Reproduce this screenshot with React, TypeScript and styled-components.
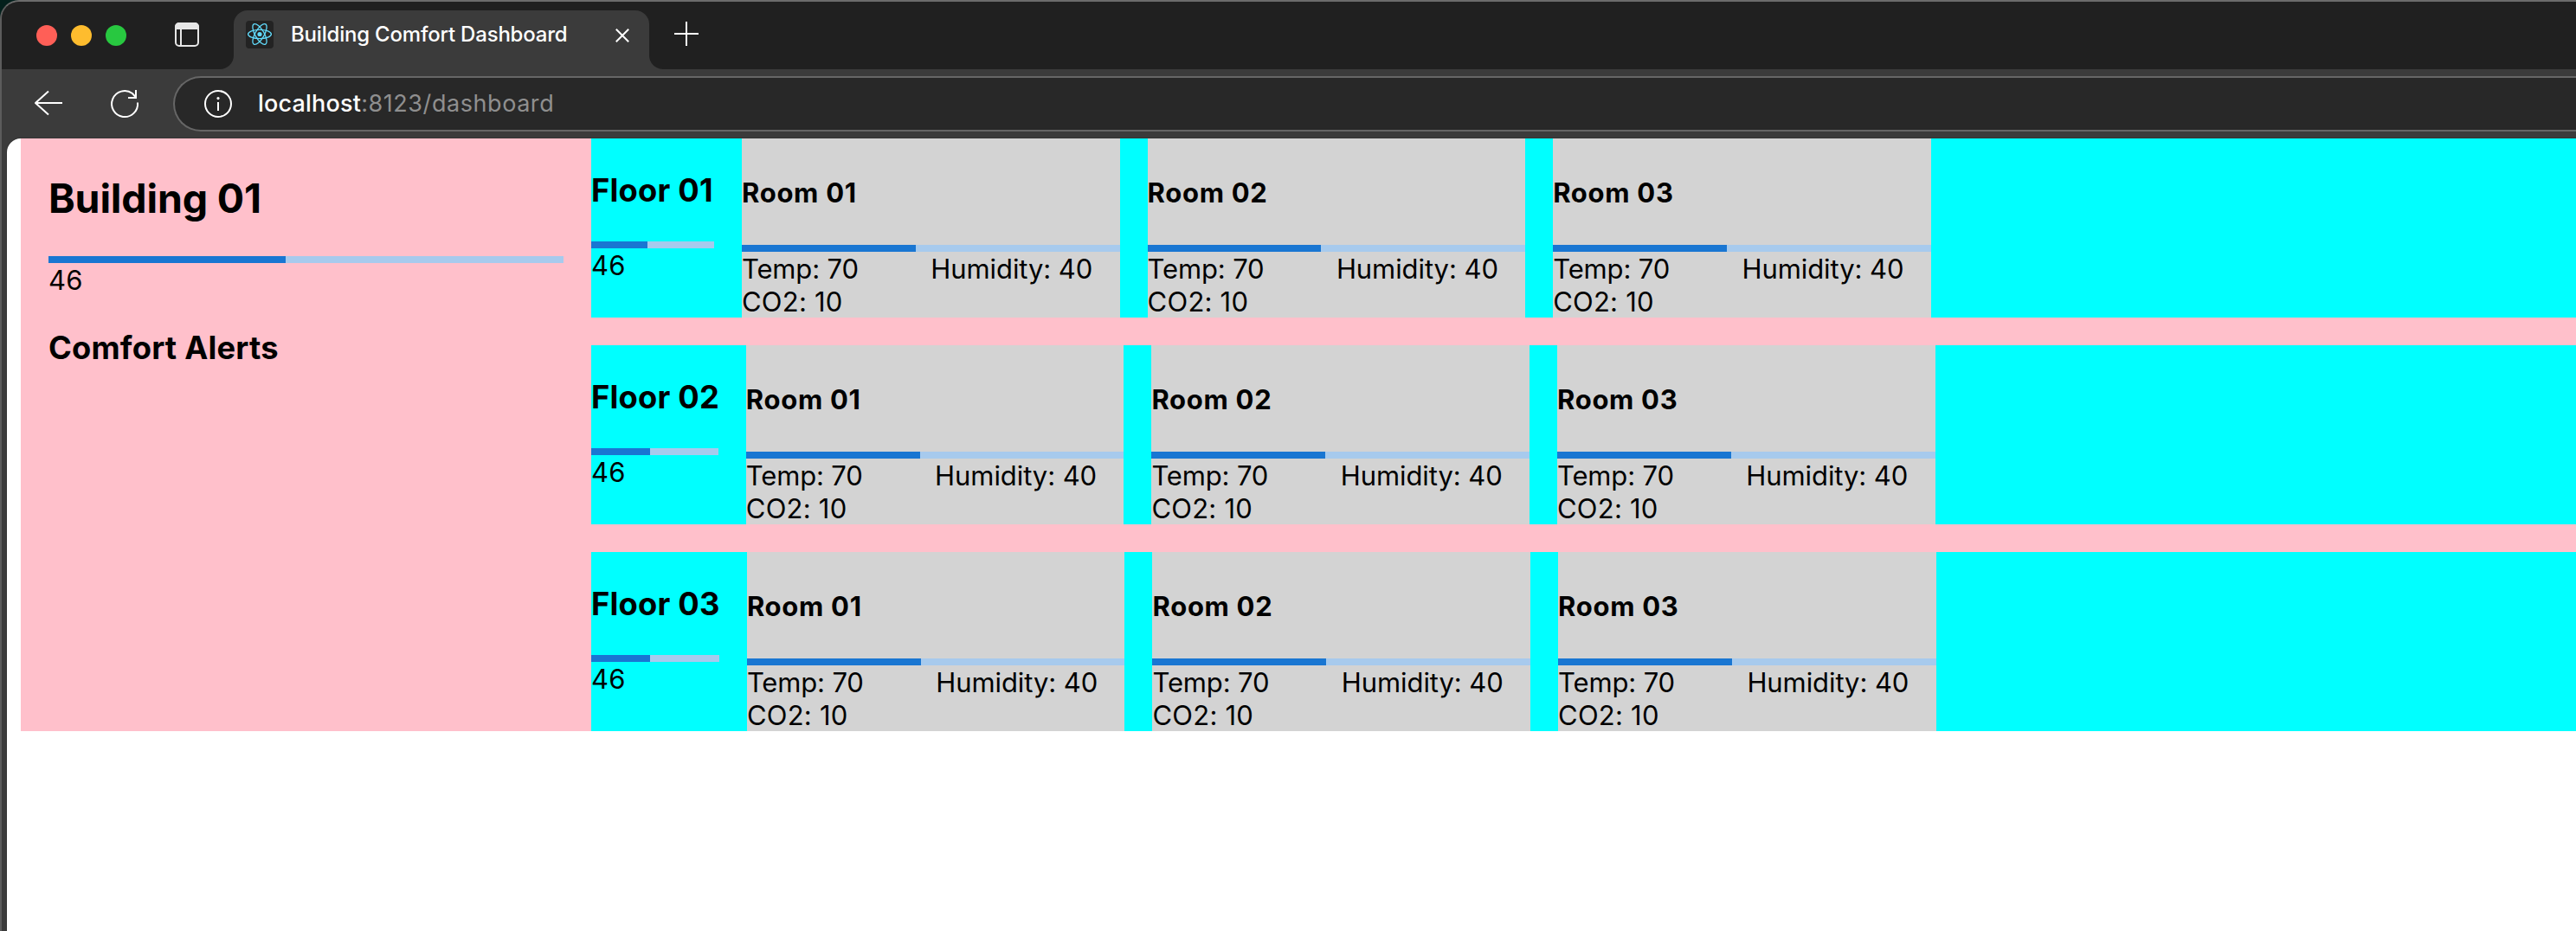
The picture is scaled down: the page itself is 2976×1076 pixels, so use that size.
import React from "react";
import styled, { createGlobalStyle } from "styled-components";

const GlobalStyle = createGlobalStyle`
  html, body { margin: 0; padding: 0; background: #04201c; }
  * { box-sizing: border-box; }
  body { font-family: "Inter", "Liberation Sans", sans-serif; color: #000; overflow: hidden; }
  h1, h2, h3, p { margin: 0; }
  svg { display: block; flex: none; }
`;

/* ---------- browser window ---------- */

const Window = styled.div`
  display: flex;
  flex-direction: column;
  width: 2976px;
  height: 1076px;
  border-top: 2px solid #6b6b6b;
  border-left: 2px solid #5c5c5c;
  border-top-left-radius: 22px;
  background: #3b3b3b;
  overflow: hidden;
`;

const TitleBar = styled.header`
  display: flex;
  height: 78px;
  flex: none;
`;

const WindowControls = styled.div`
  display: flex;
  align-items: center;
  gap: 16px;
  width: 268px;
  padding-left: 40px;
  background: #202020;
  border-bottom-right-radius: 16px;
`;

const Light = styled.span<{ $color: string }>`
  width: 24px;
  height: 24px;
  border-radius: 50%;
  background: ${(p) => p.$color};
`;

const PanelIcon = styled.svg`
  margin: -3px 0 0 40px;
`;

const TabSlot = styled.div`
  width: 480px;
  padding-top: 10px;
  background: linear-gradient(#202020 40px, transparent 40px);
`;

const Tab = styled.div`
  display: flex;
  align-items: flex-start;
  height: 68px;
  padding: 12px 23px 0 14px;
  border-radius: 16px 16px 0 0;
  background: #3b3b3b;
`;

const Favicon = styled.svg`
  border-radius: 4px;
  background: #232323;
`;

const TabTitle = styled.span`
  flex: 1;
  margin-left: 20px;
  padding-top: 1px;
  color: #fff;
  font-size: 24px;
  font-weight: 500;
  line-height: 29px;
  letter-spacing: -0.2px;
  white-space: nowrap;
`;

const CloseIcon = styled.svg`
  margin-top: 9px;
`;

const TabStrip = styled.div`
  flex: 1;
  padding: 23px 0 0 29px;
  background: #202020;
  border-bottom-left-radius: 16px;
`;

const Toolbar = styled.div`
  display: flex;
  align-items: center;
  flex: none;
  height: 80px;
  padding-left: 36px;
`;

const ReloadIcon = styled.svg`
  margin: 0 38px 0 52px;
`;

const AddressBar = styled.div`
  display: flex;
  align-items: center;
  flex: 1;
  height: 64px;
  padding-left: 34px;
  border: 2px solid #666;
  border-right: 0;
  border-radius: 32px 0 0 32px;
  background: #282828;
`;

const Url = styled.span`
  margin-left: 30px;
  color: #8f8f8f;
  font-size: 27px;
  line-height: 34px;
  letter-spacing: 0.56px;
  white-space: nowrap;
`;

const Host = styled.span`
  color: #fff;
  font-weight: 500;
  letter-spacing: 0.2px;
`;

const Viewport = styled.div`
  flex: 1;
  margin-left: 6px;
  padding-left: 16px;
  border-top-left-radius: 16px;
  background: #fff;
  box-shadow: 0 0 0 1px #343434;
  overflow: hidden;
`;

/* ---------- dashboard ---------- */

const Dashboard = styled.main`
  display: flex;
  background: pink;
`;

const Sidebar = styled.aside`
  width: 659px;
  flex: none;
  padding: 41px 32px 0;
`;

const BuildingName = styled.h1`
  margin-bottom: 39px;
  font-size: 46.5px;
  line-height: 56px;
  letter-spacing: -0.15px;
`;

const SectionTitle = styled.h2`
  font-size: 36.3px;
  line-height: 44px;
  letter-spacing: 0.2px;
  white-space: nowrap;
`;

const AlertsTitle = styled(SectionTitle)`
  margin-top: 38px;
`;

const FloorName = styled(SectionTitle)`
  margin: 38px 0 37px;
`;

const RoomName = styled.h3`
  margin: 44px 0 42px;
  font-size: 31px;
  line-height: 37px;
  letter-spacing: 0.7px;
`;

const Track = styled.div`
  height: 8px;
  background: #a7caed;
`;

const Fill = styled.div`
  height: 100%;
  background: #1976d2;
`;

const Value = styled.p<{ $spacing?: number }>`
  padding-top: 1px;
  font-size: 31px;
  line-height: 37px;
  letter-spacing: ${(p) => p.$spacing ?? 0}px;
  white-space: nowrap;
`;

const Floors = styled.div`
  display: flex;
  flex-direction: column;
  flex: 1;
  gap: 32px;
`;

const Floor = styled.section`
  display: flex;
  gap: 32px;
  height: 207px;
  background: cyan;
`;

const FloorSummary = styled.div<{ $width: number }>`
  width: ${(p) => p.$width}px;
  flex: none;
`;

const Room = styled.article`
  width: 436.6px;
  flex: none;
  background: lightgray;
`;

const Metrics = styled.div`
  display: grid;
  grid-template-columns: 1fr 1fr;
`;

const floors = [
  { name: "Floor 01", width: 142 },
  { name: "Floor 02", width: 146.8 },
  { name: "Floor 03", width: 147.9 },
];
const rooms = ["Room 01", "Room 02", "Room 03"];
const comfort = 46;

function Progress({ value }: { value: number }) {
  return (
    <Track>
      <Fill style={{ width: `${value}%` }} />
    </Track>
  );
}

function RoomCard({ name }: { name: string }) {
  return (
    <Room>
      <RoomName>{name}</RoomName>
      <Progress value={comfort} />
      <Metrics>
        <Value $spacing={-0.15}>Temp: 70</Value>
        <Value $spacing={-0.08}>Humidity: 40</Value>
        <Value $spacing={0.22}>CO2: 10</Value>
      </Metrics>
    </Room>
  );
}

function Chrome() {
  return (
    <>
      <TitleBar>
        <WindowControls>
          <Light $color="#ff5f57" />
          <Light $color="#febc2e" />
          <Light $color="#28c840" />
          <PanelIcon width="28" height="28" viewBox="0 0 28 28" fill="none">
            <rect x="1" y="1" width="26" height="26" rx="4" stroke="#e6e6e6" strokeWidth="2" />
            <path d="M0 8V5a5 5 0 0 1 5-5h18a5 5 0 0 1 5 5v3z" fill="#e6e6e6" />
            <path d="M7 8v19" stroke="#e6e6e6" strokeWidth="2" />
          </PanelIcon>
        </WindowControls>
        <TabSlot>
          <Tab>
            <Favicon width="32" height="32" viewBox="0 0 32 32" fill="none">
              <g stroke="#61dafb" strokeWidth="1.3">
                <ellipse cx="16" cy="15.5" rx="13.4" ry="5.2" />
                <ellipse cx="16" cy="15.5" rx="13.4" ry="5.2" transform="rotate(60 16 15.5)" />
                <ellipse cx="16" cy="15.5" rx="13.4" ry="5.2" transform="rotate(120 16 15.5)" />
              </g>
              <circle cx="16" cy="15.5" r="2.6" fill="#61dafb" />
            </Favicon>
            <TabTitle>Building Comfort Dashboard</TabTitle>
            <CloseIcon width="16" height="16" viewBox="0 0 16 16">
              <path d="M.8.8l14.4 14.4M15.2.8L.8 15.2" stroke="#fff" strokeWidth="2" />
            </CloseIcon>
          </Tab>
        </TabSlot>
        <TabStrip>
          <svg width="28" height="28" viewBox="0 0 28 28">
            <path d="M14 0v28M0 14h28" stroke="#fff" strokeWidth="2" />
          </svg>
        </TabStrip>
      </TitleBar>
      <Toolbar>
        <svg width="36" height="36" viewBox="0 0 36 36" fill="none" stroke="#fff" strokeWidth="2" strokeLinejoin="round">
          <path d="M34 17H3M18 3.500L3 17l15 13.500" />
        </svg>
        <ReloadIcon width="36" height="36" viewBox="0 0 36 36" fill="none" stroke="#fff" strokeWidth="2">
          <path d="M33 16.500A15 15 0 1 1 27 6L31 10.500" />
          <path d="M31 2v9h-9" />
        </ReloadIcon>
        <AddressBar>
          <svg width="32" height="32" viewBox="0 0 32 32" fill="none">
            <circle cx="16" cy="16" r="15" stroke="#fff" strokeWidth="2" />
            <circle cx="16" cy="9.6" r="1.6" fill="#fff" />
            <path d="M16 14v10" stroke="#fff" strokeWidth="2" />
          </svg>
          <Url>
            <Host>localhost</Host>:8123/dashboard
          </Url>
        </AddressBar>
      </Toolbar>
    </>
  );
}

export default function App() {
  return (
    <>
      <GlobalStyle />
      <Window>
        <Chrome />
        <Viewport>
          <Dashboard>
            <Sidebar>
              <BuildingName>Building 01</BuildingName>
              <Progress value={comfort} />
              <Value $spacing={0.3}>{comfort}</Value>
              <AlertsTitle>Comfort Alerts</AlertsTitle>
            </Sidebar>
            <Floors>
              {floors.map((floor) => (
                <Floor key={floor.name}>
                  <FloorSummary $width={floor.width}>
                    <FloorName>{floor.name}</FloorName>
                    <Progress value={comfort} />
                    <Value $spacing={0.3}>{comfort}</Value>
                  </FloorSummary>
                  {rooms.map((room) => (
                    <RoomCard key={room} name={room} />
                  ))}
                </Floor>
              ))}
            </Floors>
          </Dashboard>
        </Viewport>
      </Window>
    </>
  );
}
